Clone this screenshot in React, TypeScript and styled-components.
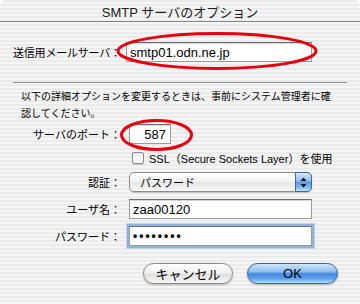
import React from "react";
import styled, { createGlobalStyle } from "styled-components";

const UI_FONT = `"Liberation Sans", "Noto Sans CJK JP", sans-serif`;

const GlobalStyle = createGlobalStyle`
  html, body {
    margin: 0;
    padding: 0;
    background: #ffffff;
  }
  body {
    font-family: ${UI_FONT};
    color: #000;
  }
`;

const pinstripe = `repeating-linear-gradient(
  to bottom,
  #ebebeb 0px,
  #ebebeb 2px,
  #f5f5f5 2px,
  #f5f5f5 4px
)`;

const Window = styled.div`
  position: relative;
  width: 360px;
  height: 304px;
  background: ${pinstripe};
  border-radius: 6px 6px 0 0;
  overflow: hidden;
`;

const TitleBar = styled.div`
  height: 21px;
  display: flex;
  align-items: center;
  justify-content: center;
  border-bottom: 1px solid #858585;
`;

const Title = styled.span`
  font-size: 13px;
  color: #1a1a1a;
  padding-top: 1px;
`;

const Content = styled.div`
  padding: 20px 0 0 13px;
`;

const ServerRow = styled.div`
  display: flex;
  align-items: center;
  height: 20px;
`;

const ServerLabel = styled.span`
  flex: none;
  width: 113px;
  font-size: 11px;
  letter-spacing: -0.2px;
  white-space: nowrap;
`;

const TextField = styled.div<{ $width: number; $align?: string; $focus?: boolean }>`
  box-sizing: border-box;
  width: ${(p) => p.$width}px;
  height: 20px;
  padding: 0 4px 0 3px;
  display: flex;
  align-items: center;
  justify-content: ${(p) => (p.$align === "right" ? "flex-end" : "flex-start")};
  background: #fff;
  border: 1px solid #9a9a9a;
  border-top-color: #6e6e6e;
  box-shadow: ${(p) =>
    p.$focus
      ? "0 0 0 2px #8fb4e0, 0 0 0 3px #bcd3ee"
      : "inset 0 1px 0 #d6d6d6"};
  font-size: 13px;
  white-space: nowrap;
`;

const Dots = styled.span`
  font-size: 12px;
  letter-spacing: 2px;
  font-weight: bold;
`;

const Separator = styled.div`
  width: 334px;
  margin-top: 20px;
  border-top: 1px solid #8c8c8c;
  border-bottom: 1px solid #fafafa;
`;

const Note = styled.p`
  margin: 4px 0 0 8px;
  width: 314px;
  font-size: 10px;
  line-height: 17px;
`;

const Form = styled.div`
  display: grid;
  grid-template-columns: 108px 1fr;
  grid-template-rows: 20px 14px 20px 20px 20px;
  column-gap: 8px;
  row-gap: 7px;
  margin-top: 2px;
  align-items: center;
`;

const Label = styled.span`
  font-size: 11px;
  text-align: right;
  white-space: nowrap;
`;

const CheckRow = styled.label`
  grid-column: 2;
  display: flex;
  align-items: center;
  gap: 5px;
  padding-left: 3px;
  font-size: 11px;
  white-space: nowrap;
`;

const Checkbox = styled.span`
  box-sizing: border-box;
  width: 12px;
  height: 12px;
  border: 1px solid #8a8a8a;
  border-radius: 2px;
  background: linear-gradient(to bottom, #e9e9e9, #ffffff 60%);
  box-shadow: 0 1px 1px rgba(0, 0, 0, 0.15);
`;

const Popup = styled.div`
  position: relative;
  box-sizing: border-box;
  width: 183px;
  height: 20px;
  display: flex;
  align-items: center;
  padding-left: 10px;
  border: 1px solid #8d8d8d;
  border-radius: 5px;
  background: linear-gradient(to bottom, #ffffff 0%, #f4f4f4 45%, #e6e6e6 55%, #f7f7f7 100%);
  box-shadow: 0 1px 1px rgba(0, 0, 0, 0.18);
  font-size: 11px;
`;

const PopupArrows = styled.span`
  position: absolute;
  top: -1px;
  right: -1px;
  width: 17px;
  height: 20px;
  box-sizing: border-box;
  border: 1px solid #40699f;
  border-radius: 0 5px 5px 0;
  background: linear-gradient(
    to bottom,
    #d8e9fb 0%,
    #8ebcee 45%,
    #5a9ae5 52%,
    #7fbaf2 80%,
    #bfe8ff 100%
  );
  display: flex;
  align-items: center;
  justify-content: center;
`;

const ButtonBar = styled.div`
  display: flex;
  justify-content: flex-end;
  gap: 14px;
  margin-top: 17px;
  padding-right: 22px;
`;

const PushButton = styled.button<{ $default?: boolean; $width: number }>`
  box-sizing: border-box;
  width: ${(p) => p.$width}px;
  height: 21px;
  padding: 0;
  border-radius: 11px;
  font-family: ${UI_FONT};
  font-size: 13px;
  color: #000;
  border: 1px solid ${(p) => (p.$default ? "#3a639b" : "#8a8a8a")};
  background: ${(p) =>
    p.$default
      ? "linear-gradient(to bottom, #d0e4fb 0%, #8fbdef 40%, #4588dc 52%, #5fa2ee 78%, #b0e3ff 100%)"
      : "linear-gradient(to bottom, #ffffff 0%, #f2f2f2 45%, #e0e0e0 55%, #f6f6f6 100%)"};
  box-shadow: 0 1px 2px rgba(0, 0, 0, 0.25);
`;

const Marks = styled.svg`
  position: absolute;
  top: 0;
  left: 0;
  pointer-events: none;
`;

export default function App() {
  return (
    <>
      <GlobalStyle />
      <Window>
        <TitleBar>
          <Title>SMTP サーバのオプション</Title>
        </TitleBar>
        <Content>
          <ServerRow>
            <ServerLabel>送信用メールサーバ：</ServerLabel>
            <TextField $width={186}>smtp01.odn.ne.jp</TextField>
          </ServerRow>
          <Separator />
          <Note>
            以下の詳細オプションを変更するときは、事前にシステム管理者に確認してください。
          </Note>
          <Form>
            <Label>サーバのポート：</Label>
            <TextField $width={42} $align="right">
              587
            </TextField>
            <CheckRow>
              <Checkbox />
              SSL（Secure Sockets Layer）を使用
            </CheckRow>
            <Label>認証：</Label>
            <Popup>
              パスワード
              <PopupArrows>
                <svg width="7" height="11" viewBox="0 0 7 11">
                  <path d="M3.5 0.5 L6.5 4 L0.5 4 Z" fill="#111" />
                  <path d="M0.5 7 L6.5 7 L3.5 10.5 Z" fill="#111" />
                </svg>
              </PopupArrows>
            </Popup>
            <Label>ユーザ名：</Label>
            <TextField $width={183}>zaa00120</TextField>
            <Label>パスワード：</Label>
            <TextField $width={183} $focus>
              <Dots>••••••••</Dots>
            </TextField>
          </Form>
          <ButtonBar>
            <PushButton $width={90}>キャンセル</PushButton>
            <PushButton $width={91} $default>
              OK
            </PushButton>
          </ButtonBar>
        </Content>
        <Marks width="360" height="304" viewBox="0 0 360 304">
          <ellipse cx="217" cy="51" rx="99" ry="17.5" fill="none" stroke="#e8000d" strokeWidth="3" />
          <ellipse cx="156.5" cy="135" rx="35" ry="14.5" fill="none" stroke="#e8000d" strokeWidth="3" />
        </Marks>
      </Window>
    </>
  );
}
